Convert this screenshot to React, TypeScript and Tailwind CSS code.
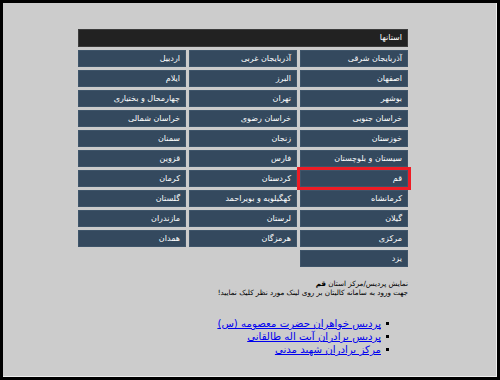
const provinces: string[][] = [
  ['آذربایجان شرقی', 'آذربایجان غربی', 'اردبیل'],
  ['اصفهان', 'البرز', 'ایلام'],
  ['بوشهر', 'تهران', 'چهارمحال و بختیاری'],
  ['خراسان جنوبی', 'خراسان رضوی', 'خراسان شمالی'],
  ['خوزستان', 'زنجان', 'سمنان'],
  ['سیستان و بلوچستان', 'فارس', 'قزوین'],
  ['قم', 'کردستان', 'کرمان'],
  ['کرمانشاه', 'کهگیلویه و بویراحمد', 'گلستان'],
  ['گیلان', 'لرستان', 'مازندران'],
  ['مرکزی', 'هرمزگان', 'همدان'],
  ['یزد'],
];

const campuses = [
  'پردیس خواهران حضرت معصومه (س)',
  'پردیس برادران آیت اله طالقانی',
  'مرکز برادران شهید مدنی',
];

export default function App() {
  return (
    <div className="h-[380px] w-[500px] border-[3px] border-black bg-black">
      <div className="h-full w-full border-b border-r border-[#ececec] bg-[#cccccc] pt-[26px] font-['DejaVu_Sans',sans-serif]">
        <div dir="rtl" className="ml-[75px] w-[330px]">
          <div className="flex h-[18px] items-center border border-[#3c3c3c] bg-[#222222] pr-[5px] text-[8px] text-white">
            استانها
          </div>
          <div className="mt-[3px] grid grid-cols-3 gap-[3px]">
            {provinces.flat().map((name) => (
              <div
                key={name}
                className={
                  'flex h-[17px] items-center border border-[#3e5469] bg-[#34495e] pr-[5px] text-[8px] leading-none text-white' +
                  (name === 'قم' ? ' outline-[3px] outline-solid outline-[#ee1c25]' : '')
                }
              >
                {name}
              </div>
            ))}
          </div>
          <div className="mt-[12px] text-[7.2px] leading-[9px] text-black">
            <div>
              نمایش پردیس/مرکز استان <b>قم</b>
            </div>
            <div>جهت ورود به سامانه کالیتان بر روی لینک مورد نظر کلیک نمایید!</div>
          </div>
          <ul className="mt-[20px] pr-[19px]">
            {campuses.map((c) => (
              <li key={c} className="flex h-[13px] items-center gap-[5px]">
                <span className="h-[3px] w-[3px] bg-black" />
                <a href="#" className="text-[10.2px] leading-[13px] text-[#0000ee] underline">
                  {c}
                </a>
              </li>
            ))}
          </ul>
        </div>
      </div>
    </div>
  );
}
